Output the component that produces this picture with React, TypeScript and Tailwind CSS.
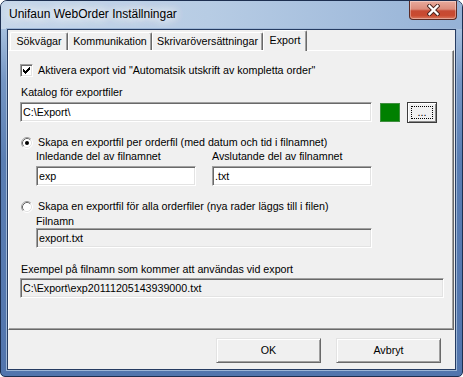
import React from "react";

function Edit({ w, value, disabled }: { w: string; value: string; disabled?: boolean }) {
  return (
    <div
      className={`${w} h-[20px] shrink-0 flex items-center pl-[2px] border border-t-[#a0a0a0] border-l-[#a0a0a0] border-b-white border-r-white shadow-[inset_1px_1px_0_#696969,inset_-1px_-1px_0_#e3e3e3] ${
        disabled ? "bg-[#f0f0f0]" : "bg-white"
      } whitespace-nowrap overflow-hidden`}
    >
      {value}
    </div>
  );
}

function Radio({ checked }: { checked?: boolean }) {
  return (
    <svg width="12" height="12" viewBox="0 0 12 12" className="shrink-0">
      <circle cx="6" cy="6" r="5" fill="#ffffff" />
      <path d="M2.11 9.89 A5.5 5.5 0 0 1 9.89 2.11" fill="none" stroke="#a0a0a0" strokeWidth="1" />
      <path d="M9.89 2.11 A5.5 5.5 0 0 1 2.11 9.89" fill="none" stroke="#ffffff" strokeWidth="1" />
      <path d="M2.82 9.18 A4.5 4.5 0 0 1 9.18 2.82" fill="none" stroke="#696969" strokeWidth="1" />
      <path d="M9.18 2.82 A4.5 4.5 0 0 1 2.82 9.18" fill="none" stroke="#e3e3e3" strokeWidth="1" />
      {checked && <circle cx="6" cy="6" r="2" fill="#000" />}
    </svg>
  );
}

function Checkbox() {
  return (
    <div className="w-[13px] h-[13px] shrink-0 bg-white border border-t-[#a0a0a0] border-l-[#a0a0a0] border-b-white border-r-white shadow-[inset_1px_1px_0_#696969,inset_-1px_-1px_0_#e3e3e3] flex items-center justify-center">
      <svg width="7" height="7" viewBox="0 0 7 7" shapeRendering="crispEdges">
        <rect x="6" y="0" width="1" height="1" fill="#000" />
        <rect x="5" y="1" width="2" height="1" fill="#000" />
        <rect x="0" y="2" width="1" height="1" fill="#000" />
        <rect x="4" y="2" width="3" height="1" fill="#000" />
        <rect x="0" y="3" width="2" height="1" fill="#000" />
        <rect x="3" y="3" width="3" height="1" fill="#000" />
        <rect x="0" y="4" width="5" height="1" fill="#000" />
        <rect x="1" y="5" width="3" height="1" fill="#000" />
        <rect x="2" y="6" width="1" height="1" fill="#000" />
      </svg>
    </div>
  );
}

function Btn({ children }: { children: React.ReactNode }) {
  return (
    <div className="w-[105px] h-[25px] flex items-center justify-center bg-[#f0f0f0] border border-t-[#e3e3e3] border-l-[#e3e3e3] border-b-[#696969] border-r-[#696969] shadow-[inset_1px_1px_0_#ffffff,inset_-1px_-1px_0_#a0a0a0]">
      {children}
    </div>
  );
}

export default function App() {
  return (
    <div className="w-[463px] h-[377px] font-['Liberation_Sans',Arial,sans-serif] text-[10.7px] leading-[13px] text-black">
      <div className="w-full h-full flex flex-col border border-[#1d2f50] rounded-t-[7px] rounded-b-[5px] overflow-hidden px-[6px] pb-[6px] bg-[linear-gradient(180deg,#b8cde5_0px,#a4bedd_30px,#7596c4_80px,#5a7eb3_160px,#5275ad_100%)]">
        {/* title bar */}
        <div className="h-[28px] shrink-0 -mx-[6px] flex items-start bg-[linear-gradient(90deg,#c6d7ea_0%,#b7cce4_45%,#a2bcdc_80%,#95b2d6_100%)]">
          <div className="pl-[8px] pt-[6px] text-[12px] leading-[15px] text-black whitespace-nowrap [text-shadow:0_0_8px_#ffffff,0_0_12px_#ffffff,0_0_16px_#ffffff]">
            Unifaun WebOrder Inställningar
          </div>
          <div className="ml-auto mr-[5px] w-[48px] h-[19px] rounded-b-[4px] border border-t-0 border-[#5a2a24] bg-[linear-gradient(180deg,#e8aa9c_0%,#dc8c7b_45%,#c64a33_55%,#c94a30_80%,#d8785f_100%)] shadow-[inset_0_0_0_1px_rgba(255,255,255,0.35)] flex items-center justify-center">
            <svg width="13" height="12" viewBox="0 0 13 12">
              <path d="M2.5 2 L10.5 10 M10.5 2 L2.5 10" stroke="#4a2520" strokeWidth="4.2" strokeLinecap="square" fill="none" />
              <path d="M2.5 2 L10.5 10 M10.5 2 L2.5 10" stroke="#ffffff" strokeWidth="2.3" strokeLinecap="square" fill="none" />
            </svg>
          </div>
        </div>

        {/* client */}
        <div className="flex-1 flex flex-col bg-[#f0f0f0] border border-[#263c62] shadow-[0_0_0_1px_#9db6d6]">
          {/* tab strip */}
          <div className="h-[20px] shrink-0 flex items-end pl-[2px]">
            <div className="w-[58px] h-[18px] flex items-center justify-center border-t border-l border-r border-t-white border-l-white border-r-[#696969] shadow-[inset_-1px_0_0_#a0a0a0] rounded-t-[2px]">
              Sökvägar
            </div>
            <div className="w-[84px] h-[18px] flex items-center justify-center border-t border-l border-r border-t-white border-l-white border-r-[#696969] shadow-[inset_-1px_0_0_#a0a0a0] rounded-t-[2px]">
              Kommunikation
            </div>
            <div className="w-[111px] h-[18px] flex items-center justify-center border-t border-l border-r border-t-white border-l-white border-r-[#696969] shadow-[inset_-1px_0_0_#a0a0a0] rounded-t-[2px] whitespace-nowrap">
              Skrivaröversättningar
            </div>
            <div className="relative z-10 self-start w-[44px] h-[21px] pb-[2px] flex items-center justify-center bg-[#f0f0f0] border-t border-l border-r border-t-white border-l-white border-r-[#696969] shadow-[inset_-1px_0_0_#a0a0a0] rounded-t-[2px]">
              Export
            </div>
          </div>

          {/* tab panel */}
          <div className="w-[446px] h-[280px] shrink-0 border border-t-white border-l-white border-b-[#696969] border-r-[#696969] shadow-[inset_-1px_-1px_0_#a0a0a0] pl-[11px] pt-[13px] flex flex-col">
            <div className="h-[13px] flex items-center">
              <Checkbox />
              <span className="ml-[5px] whitespace-nowrap">Aktivera export vid "Automatsik utskrift av kompletta order"</span>
            </div>

            <div className="mt-[9px] pl-[1px] h-[13px]">Katalog för exportfiler</div>

            <div className="mt-[3px] flex items-start">
              <Edit w="w-[352px]" value="C:\Export\" />
              <div className="ml-[8px] mt-[1px] w-[20px] h-[19px] bg-[#008000] border border-[#3f8f3f]" />
              <div className="ml-[7px] w-[30px] h-[21px] p-[3px] flex bg-[#f0f0f0] border border-[#3c3c3c] shadow-[inset_1px_1px_0_#ffffff,inset_-1px_-1px_0_#8a8a8a]">
                <div className="flex-1 border border-dotted border-black flex items-end justify-center leading-[10px] pb-[1px]">
                  ...
                </div>
              </div>
            </div>

            <div className="mt-[13px] h-[13px] pl-[1px] flex items-center">
              <Radio checked />
              <span className="ml-[5px] whitespace-nowrap">Skapa en exportfil per orderfil (med datum och tid i filnamnet)</span>
            </div>

            <div className="mt-[1px] h-[13px] pl-[16px] flex">
              <div className="w-[176px]">Inledande del av filnamnet</div>
              <div>Avslutande del av filnamnet</div>
            </div>

            <div className="mt-[3px] pl-[16px] flex gap-[16px]">
              <Edit w="w-[160px]" value="exp" />
              <Edit w="w-[160px]" value=".txt" />
            </div>

            <div className="mt-[14px] h-[13px] pl-[1px] flex items-center">
              <Radio />
              <span className="ml-[5px] whitespace-nowrap">Skapa en exportfil för alla orderfiler (nya rader läggs till i filen)</span>
            </div>

            <div className="mt-[2px] h-[13px] pl-[16px]">Filnamn</div>

            <div className="pl-[16px] flex">
              <Edit w="w-[336px]" value="export.txt" disabled />
            </div>

            <div className="mt-[15px] h-[13px] pl-[1px]">Exempel på filnamn som kommer att användas vid export</div>

            <div className="mt-[2px] flex">
              <Edit w="w-[424px]" value="C:\Export\exp20111205143939000.txt" disabled />
            </div>
          </div>

          {/* buttons */}
          <div className="flex justify-end gap-[15px] pr-[14px] pt-[8px]">
            <Btn>OK</Btn>
            <Btn>Avbryt</Btn>
          </div>
        </div>
      </div>
    </div>
  );
}
